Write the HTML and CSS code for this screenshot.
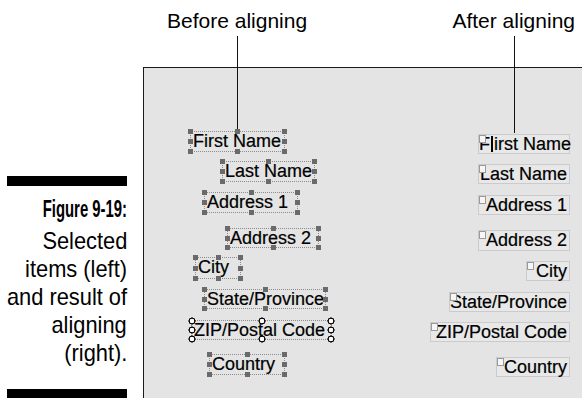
FILE: index.html
```html
<!DOCTYPE html>
<html>
<head>
    <title>Figure 9-19 - Aligning controls</title>
    <meta name="viewport" content="width=device-width, initial-scale=1.0">
    <link rel="stylesheet" href="styles.css">
</head>
<body>
    <div class="page">
        <header class="callouts">
            <span class="callout callout-before">Before aligning</span>
            <span class="callout callout-after">After aligning</span>
        </header>

        <aside class="caption">
            <div class="bar"></div>
            <span class="caption-title">Figure 9-19:</span>
            <span class="caption-line">Selected</span>
            <span class="caption-line">items (left)</span>
            <span class="caption-line">and result of</span>
            <span class="caption-line">aligning</span>
            <span class="caption-line">(right).</span>
            <div class="bar bar-bottom"></div>
        </aside>

        <div class="canvas">
            <!-- controls before aligning (selected) -->
            <div class="ctl selected" style="left:46px; top:63px; width:95px; height:21px;">First Name</div>
            <div class="ctl selected" style="left:78px; top:93px; width:93px; height:21px;">Last Name</div>
            <div class="ctl selected" style="left:60px; top:124px; width:94px; height:21px;">Address 1</div>
            <div class="ctl selected" style="left:83px; top:160px; width:92px; height:20px;">Address 2</div>
            <div class="ctl selected" style="left:51px; top:189px; width:46px; height:22px;">City</div>
            <div class="ctl selected" style="left:60px; top:221px; width:122px; height:20px;">State/Province</div>
            <div class="ctl selected primary" style="left:47px; top:252px; width:141px; height:20px;">ZIP/Postal Code</div>
            <div class="ctl selected" style="left:65px; top:286px; width:76px; height:21px;">Country</div>

            <!-- controls after aligning right -->
            <div class="ctl aligned" style="left:334px; top:66px; width:92px; height:20px;">F<span class="caret"></span>irst Name</div>
            <div class="ctl aligned" style="left:334px; top:96px; width:92px; height:20px;">Last Name</div>
            <div class="ctl aligned" style="left:334px; top:127px; width:92px; height:20px;">Address 1</div>
            <div class="ctl aligned" style="left:334px; top:162px; width:92px; height:21px;">Address 2</div>
            <div class="ctl aligned" style="left:382px; top:193px; width:44px; height:20px;">City</div>
            <div class="ctl aligned" style="left:305px; top:224px; width:121px; height:20px;">State/Province</div>
            <div class="ctl aligned" style="left:286px; top:254px; width:140px; height:20px;">ZIP/Postal Code</div>
            <div class="ctl aligned" style="left:352px; top:289px; width:74px; height:20px;">Country</div>
        </div>
    </div>
</body>
</html>
```

FILE: styles.css
```css
body {
    margin: 0;
    background: #fff;
    color: #000;
}
.page {
    width: 582px;
    height: 398px;
    overflow: hidden;
    display: grid;
    grid-template-columns: 143px 1fr;
    grid-template-rows: 67px 1fr;
}

/* labels on top, with leader lines */
.callouts {
    grid-column: 1 / -1;
    display: flex;
    padding-top: 8px;
    position: relative;
    z-index: 2;
    font-family: "Liberation Sans", Arial, sans-serif;
    font-size: 21px;
    line-height: 26px;
}
.callout {
    position: relative;
    align-self: flex-start;
}
.callout::after {
    content: "";
    position: absolute;
    left: 50%;
    top: calc(100% + 2px);
    width: 1px;
    background: #111;
}
.callout-before {
    margin-left: 167px;
}
.callout-before::after {
    height: 93px;
}
.callout-after {
    margin-left: auto;
    margin-right: 7px;
}
.callout-after::after {
    height: 97px;
}

/* figure caption */
.caption {
    display: flex;
    flex-direction: column;
    padding: 109px 16px 0 0;
    text-align: right;
    white-space: nowrap;
    font-family: "Liberation Sans", Arial, sans-serif;
}
.bar {
    height: 10px;
    margin-left: 7px;
    background: #000;
}
.bar-bottom {
    margin-top: 22px;
}
.caption-title {
    align-self: flex-end;
    font-weight: bold;
    font-size: 24px;
    line-height: 28px;
    margin: 9px 0 4px;
    transform: scaleX(0.62);
    transform-origin: right center;
}
.caption-line {
    align-self: flex-end;
    font-size: 24px;
    line-height: 28px;
    transform: scaleX(0.91);
    transform-origin: right center;
}

/* form design canvas */
.canvas {
    position: relative;
    background: #e4e4e4;
    border-top: 1px solid #1a1a1a;
    border-left: 1px solid #1a1a1a;
    font-family: "Liberation Sans", Arial, sans-serif;
    font-size: 18px;
    -webkit-text-stroke: 0.2px #000;
}
.ctl {
    position: absolute;
    box-sizing: border-box;
    line-height: 19px;
    white-space: nowrap;
}
.selected {
    border: 1px dotted #8c8c8c;
    padding-left: 2px;
}
.selected::before {
    content: "";
    position: absolute;
    inset: -3px;
    background:
        linear-gradient(#6a6a6a, #6a6a6a) left top / 5px 5px no-repeat,
        linear-gradient(#6a6a6a, #6a6a6a) center top / 5px 5px no-repeat,
        linear-gradient(#6a6a6a, #6a6a6a) right top / 5px 5px no-repeat,
        linear-gradient(#6a6a6a, #6a6a6a) left center / 5px 5px no-repeat,
        linear-gradient(#6a6a6a, #6a6a6a) right center / 5px 5px no-repeat,
        linear-gradient(#6a6a6a, #6a6a6a) left bottom / 5px 5px no-repeat,
        linear-gradient(#6a6a6a, #6a6a6a) center bottom / 5px 5px no-repeat,
        linear-gradient(#6a6a6a, #6a6a6a) right bottom / 5px 5px no-repeat;
}
.primary::before {
    inset: -4px;
    background:
        radial-gradient(circle, #fff 2px, #000 2.6px, #000 3.3px, transparent 3.8px) left top / 8px 8px no-repeat,
        radial-gradient(circle, #fff 2px, #000 2.6px, #000 3.3px, transparent 3.8px) center top / 8px 8px no-repeat,
        radial-gradient(circle, #fff 2px, #000 2.6px, #000 3.3px, transparent 3.8px) right top / 8px 8px no-repeat,
        radial-gradient(circle, #fff 2px, #000 2.6px, #000 3.3px, transparent 3.8px) left center / 8px 8px no-repeat,
        radial-gradient(circle, #fff 2px, #000 2.6px, #000 3.3px, transparent 3.8px) right center / 8px 8px no-repeat,
        radial-gradient(circle, #fff 2px, #000 2.6px, #000 3.3px, transparent 3.8px) left bottom / 8px 8px no-repeat,
        radial-gradient(circle, #fff 2px, #000 2.6px, #000 3.3px, transparent 3.8px) center bottom / 8px 8px no-repeat,
        radial-gradient(circle, #fff 2px, #000 2.6px, #000 3.3px, transparent 3.8px) right bottom / 8px 8px no-repeat;
}
.aligned {
    border: 1px solid #cbcbcb;
    background: #e8e8e8;
    text-align: right;
    padding-right: 2px;
}
.aligned::before {
    content: "";
    position: absolute;
    left: 0;
    top: 0;
    width: 5px;
    height: 6px;
    border: 1px solid #9a9a9a;
    background: #f6f6f6;
}
.caret {
    display: inline-block;
    width: 2px;
    height: 16px;
    margin: 0 1px;
    background: #000;
    vertical-align: -2px;
}
```
